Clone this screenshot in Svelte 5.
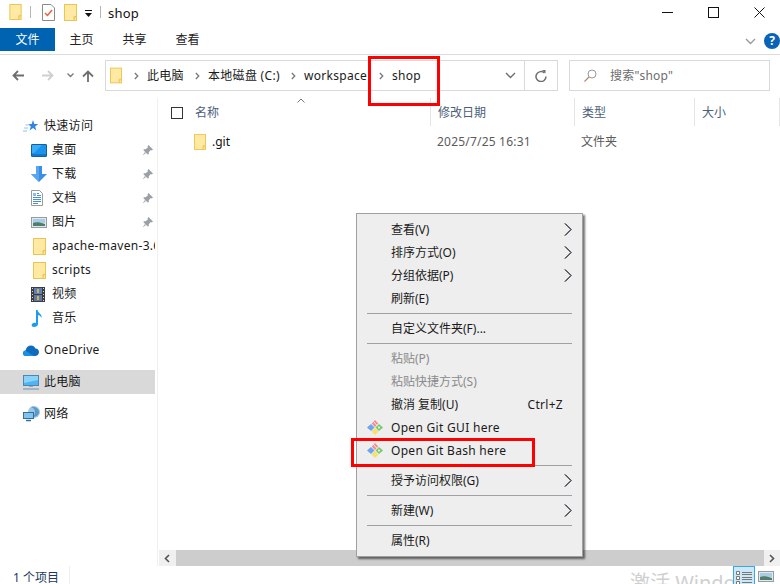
<script>
  const tabs = ["主页", "共享", "查看"];

  const crumbs = [
    { label: "此电脑", width: 48 },
    { label: "本地磁盘 (C:)", width: 83 },
    { label: "workspace", width: 75 },
    { label: "shop", width: 40 }
  ];

  const columns = [
    { label: "修改日期", width: 144 },
    { label: "类型", width: 120 },
    { label: "大小", width: 85 }
  ];

  const nav = [
    { label: "快速访问", icon: starIcon, top: true },
    { label: "桌面", icon: desktopIcon, pin: true },
    { label: "下载", icon: downloadIcon, pin: true },
    { label: "文档", icon: docsIcon, pin: true },
    { label: "图片", icon: picIcon, pin: true },
    { label: "apache-maven-3.6.3", icon: navFolder },
    { label: "scripts", icon: navFolder },
    { label: "视频", icon: videoIcon },
    { label: "音乐", icon: musicIcon },
    { label: "OneDrive", icon: cloudIcon, top: true, gap: true },
    { label: "此电脑", icon: pcIcon, top: true, gap: true, selected: true },
    { label: "网络", icon: netIcon, top: true, gap: true }
  ];

  const menu = [
    { label: "查看(V)", sub: true },
    { label: "排序方式(O)", sub: true },
    { label: "分组依据(P)", sub: true },
    { label: "刷新(E)" },
    { sep: true },
    { label: "自定义文件夹(F)..." },
    { sep: true },
    { label: "粘贴(P)", off: true },
    { label: "粘贴快捷方式(S)", off: true },
    { label: "撤消 复制(U)", key: "Ctrl+Z" },
    { label: "Open Git GUI here", git: true },
    { label: "Open Git Bash here", git: true },
    { sep: true },
    { label: "授予访问权限(G)", sub: true },
    { sep: true },
    { label: "新建(W)", sub: true },
    { sep: true },
    { label: "属性(R)" }
  ];
</script>

{#snippet folder(w, h)}
  <svg width={w} height={h} viewBox="0 0 13 17">
    <rect x="0.5" y="0.5" width="12" height="16" fill="#ffe9a3" stroke="#e9c551" />
    <path d="M10 16.5v-4h2.5" fill="#f6d874" stroke="#e9c551" />
  </svg>
{/snippet}

{#snippet navFolder()}
  <span class="nudge">{@render folder(13, 17)}</span>
{/snippet}

{#snippet chevron(w, h, color)}
  <svg width={w} height={h} viewBox="0 0 6 9">
    <path d="M1 1l3.5 3.5L1 8" fill="none" stroke={color} stroke-width="1.6" />
  </svg>
{/snippet}

{#snippet down(w, color)}
  <svg width={w} height="7" viewBox="0 0 11 7">
    <path d="M1 1l4.5 4.5L10 1" fill="none" stroke={color} stroke-width="1.4" />
  </svg>
{/snippet}

{#snippet starIcon()}
  <svg width="16" height="14" viewBox="0 0 16 14">
    <path d="M10 1l1.3 3.9h4l-3.2 2.5 1.2 4-3.3-2.4-3.4 2.4 1.2-4-2.6-2.2 3.500-.3z" fill="#2f86e0" />
    <path d="M1 9h4M2.500 6h3M0 12h4" stroke="#8fc2f2" />
  </svg>
{/snippet}

{#snippet desktopIcon()}
  <svg width="16" height="13" viewBox="0 0 16 13">
    <rect x="0.5" y="0.5" width="15" height="12" rx="0.5" fill="#1993ee" stroke="#11609f" />
    <path d="M1 11h14" stroke="#0b5da6" />
    <path d="M1 1h10L3 9H1z" fill="#39aef7" />
  </svg>
{/snippet}

{#snippet downloadIcon()}
  <svg width="16" height="16" viewBox="0 0 16 16">
    <path d="M5 0h6v8h5l-8 8-8-8h5z" fill="#3a8ee6" />
    <path d="M5 0h3v16L0 8h5z" fill="#59a6ee" />
  </svg>
{/snippet}

{#snippet docsIcon()}
  <svg width="12" height="16" viewBox="0 0 12 16">
    <path d="M.5.5h8l3 3v12H.500z" fill="#fff" stroke="#9a9a9a" />
    <path d="M6 3.500h2M6 5.500h4M2 7.500h8M2 9.500h8M2 11.500h8M2 13.500h5" stroke="#4a90d0" />
    <path d="M2 3h3v3H2z" fill="#8dbbe3" />
  </svg>
{/snippet}

{#snippet picIcon()}
  <svg width="16" height="11" viewBox="0 0 16 11">
    <rect x="0.5" y="0.5" width="15" height="10" fill="#dfe9f0" stroke="#9b9b9b" />
    <path d="M2 2h12v4H2z" fill="#a9cde4" />
    <path d="M2 6c3-1 6-1 12 1v2H2z" fill="#4f7f6a" />
  </svg>
{/snippet}

{#snippet videoIcon()}
  <svg width="14" height="15" viewBox="0 0 14 15">
    <rect width="14" height="15" fill="#3d3d3d" />
    <path d="M1 1.500h1M1 4.500h1M1 7.500h1M1 10.500h1M1 13.500h1M12 1.500h1M12 4.500h1M12 7.500h1M12 10.500h1M12 13.500h1" stroke="#d8d8d8" />
    <rect x="3" y="1" width="8" height="6" fill="#5f7fb8" />
    <rect x="3" y="8" width="8" height="6" fill="#5a78ae" />
    <path d="M6 2h2v4H6zM6 9h2v4H6z" fill="#d9b13b" />
  </svg>
{/snippet}

{#snippet musicIcon()}
  <svg width="12" height="17" viewBox="0 0 12 17">
    <path d="M5 0h1.500c.3 3 5 4 4 8-.6-2-2.500-3-3.500-3v9c0 2-2 3-4 3S0 15.500 1 14c1-1.200 2.800-1.500 4-1z" fill="#1d9bf0" />
  </svg>
{/snippet}

{#snippet cloudIcon()}
  <svg width="16" height="11" viewBox="0 0 16 11">
    <path d="M3 11C1 11 0 9.800 0 8.300 0 6.800 1.200 5.700 2.600 5.600 3 2.400 5.400.5 8 .5c2 0 3.700 1.200 4.400 3 2-.1 3.600 1.500 3.600 3.600 0 2-1.500 3.900-3.500 3.900z" fill="#0f6cbd" />
    <path d="M3 11C1 11 0 9.800 0 8.300 0 6.800 1.200 5.700 2.600 5.600l5 3.400 4 2z" fill="#1b8fe0" />
  </svg>
{/snippet}

{#snippet pcIcon()}
  <svg width="16" height="15" viewBox="0 0 16 15">
    <rect x="0.5" y="0.5" width="15" height="10" fill="#4fb4f5" stroke="#4f86ad" />
    <path d="M1 1h14v4L1 8z" fill="#8bd2fa" />
    <path d="M6 11h4v1H6z" fill="#9aa9b5" />
    <path d="M0 14h16" stroke="#8ba4b8" stroke-width="1.400" />
  </svg>
{/snippet}

{#snippet netIcon()}
  <svg width="17" height="16" viewBox="0 0 17 16">
    <circle cx="11" cy="6" r="6" fill="#9cc6e8" />
    <path d="M8 1c3 1 4 3 4 5s-1 4-3 5c4 0 7-2 7-5s-4-6-8-5z" fill="#5f97c6" />
    <rect x="0.500" y="6.500" width="10" height="6" fill="#7fc4ee" stroke="#356f97" />
    <path d="M3 14.500h5" stroke="#356f97" stroke-width="1.500" />
  </svg>
{/snippet}

{#snippet pin()}
  <svg width="11" height="11" viewBox="0 0 11 11">
    <path d="M6.500 0L11 4.500 9.700 5.500 8.800 5 6.800 7.300 6.800 9.300 5.700 9.500 1.500 5.300 1.700 4.200 3.700 4.200 6 2.200 5.500 1.300z" fill="#9aa0a6" />
    <path d="M3 7L.5 10.500 4 8z" fill="#9aa0a6" />
  </svg>
{/snippet}

{#snippet gitIcon()}
  <svg width="16" height="15" viewBox="0 0 16 15">
    <path d="M8 0l3.200 3.500L8 7 4.800 3.500z" fill="#f58b8b" />
    <path d="M12 4l4 3.500-4 3.500-3.500-3.500z" fill="#79c96f" />
    <path d="M8 8l3.500 3.500L8 15l-3.500-3.500z" fill="#f8e06c" />
    <path d="M4 4l3.500 3.500L4 11 0 7.500z" fill="#6ea4f2" />
    <path d="M6.500 1.500l3.500 4" stroke="#fff" stroke-width="0.900" />
    <circle cx="12" cy="7.500" r="1" fill="#fff" />
  </svg>
{/snippet}

<div class="window">
  <header class="titlebar">
    {@render folder(13, 16)}
    <i class="tsep"></i>
    <svg class="doc" width="13" height="17" viewBox="0 0 13 17">
      <path d="M.5.5h8.500l3.500 3.500v12.500H.5z" fill="#fff" stroke="#8b8b8b" />
      <path d="M3 9l2.500 2.500L10 6" fill="none" stroke="#e8603c" stroke-width="1.500" />
    </svg>
    {@render folder(13, 17)}
    <svg class="qat" width="7" height="7" viewBox="0 0 7 7">
      <path d="M0 0h7v1H0zM0 3h7L3.500 7z" fill="#111" />
    </svg>
    <i class="tsep"></i>
    <span class="title">shop</span>
    <div class="controls">
      <svg width="11" height="11" viewBox="0 0 11 11"><path d="M0 5.500h11" stroke="#111" /></svg>
      <svg width="11" height="11" viewBox="0 0 11 11"><rect x="0.500" y="0.500" width="10" height="10" fill="none" stroke="#111" /></svg>
      <svg width="11" height="11" viewBox="0 0 11 11"><path d="M.5.500l10 10M10.500.500l-10 10" stroke="#111" /></svg>
    </div>
  </header>

  <nav class="ribbon">
    <span class="file-tab">文件</span>
    {#each tabs as tab}
      <span class="tab">{tab}</span>
    {/each}
    <span class="ribbon-end">
      {@render down(11, "#9a9a9a")}
      <span class="help">?</span>
    </span>
  </nav>

  <div class="addressbar">
    <div class="nav-buttons">
      <svg width="12" height="11" viewBox="0 0 12 11"><path d="M12 5.500H1.500M6 1L1.500 5.500 6 10" fill="none" stroke="#6e6e6e" stroke-width="1.800" /></svg>
      <svg class="fwd" width="12" height="11" viewBox="0 0 12 11"><path d="M0 5.500h10.500M6 1l4.500 4.500L6 10" fill="none" stroke="#cfcfcf" stroke-width="1.800" /></svg>
      <svg class="hist" width="7" height="5" viewBox="0 0 7 5"><path d="M.5.500l3 3 3-3" fill="none" stroke="#777" stroke-width="1.300" /></svg>
      <svg class="up" width="12" height="12" viewBox="0 0 12 12"><path d="M6 12V1.500M1 6.500l5-5 5 5" fill="none" stroke="#6e6e6e" stroke-width="1.800" /></svg>
    </div>
    <div class="path">
      <span class="path-folder">{@render folder(12, 17)}</span>
      {#each crumbs as crumb}
        <span class="crumb-arrow">{@render chevron(5, 8, "#7b7b7b")}</span>
        <span class="crumb" style="width: {crumb.width}px">{crumb.label}</span>
      {/each}
      <span class="path-drop">{@render down(11, "#6e6e6e")}</span>
      <span class="refresh">
        <svg width="12" height="13" viewBox="0 0 12 13">
          <path d="M9.500 4A5 5 0 1 0 11 7.500" fill="none" stroke="#6e6e6e" stroke-width="1.500" />
          <path d="M7 1l3.500 0 0 3.500z" fill="#6e6e6e" />
        </svg>
      </span>
    </div>
    <div class="search">
      <svg width="13" height="13" viewBox="0 0 13 13">
        <circle cx="8" cy="5" r="4" fill="none" stroke="#9a9a9a" />
        <path d="M5 8l-4.500 4.500" stroke="#c0866a" stroke-width="1.200" />
      </svg>
      <span>搜索"shop"</span>
    </div>
  </div>

  <div class="main">
    <aside class="sidebar">
      {#each nav as item}
        <div class="nav-item" class:top={item.top} class:gap={item.gap} class:selected={item.selected}>
          <span class="nav-icon">{@render item.icon()}</span>
          <span class="nav-label">{item.label}</span>
          {#if item.pin}
            <span class="nav-pin">{@render pin()}</span>
          {/if}
        </div>
      {/each}
    </aside>

    <section class="content">
      <div class="columns">
        <div class="col name-col">
          <i class="check"></i>
          <span>名称</span>
          <svg class="sort" width="8" height="5" viewBox="0 0 8 5"><path d="M.5 4.500L4 1l3.500 3.500" fill="none" stroke="#777" /></svg>
        </div>
        {#each columns as col}
          <div class="col" style="width: {col.width}px"><span>{col.label}</span></div>
        {/each}
      </div>

      <div class="files">
        <div class="file-row">
          <span class="file-name">
            {@render folder(12, 16)}
            <b>.git</b>
          </span>
          <span class="file-date">2025/7/25 16:31</span>
          <span>文件夹</span>
        </div>
      </div>

      <div class="hscroll">
        <span class="sbtn">{@render chevron(6, 9, "#555")}</span>
        <span class="thumb"></span>
        <span class="sbtn end">{@render chevron(6, 9, "#555")}</span>
      </div>
    </section>
  </div>

  <footer class="status">
    <span class="count">1 个项目</span>
    <div class="views">
      <span class="view active">
        <svg width="16" height="13" viewBox="0 0 16 13">
          <path d="M.5.5h3v3h-3zM.5 5.500h3v3h-3zM.5 10.500h3v3h-3z" fill="#fff" stroke="#777" />
          <path d="M6 1.500h10M6 3.500h10M6 6.500h10M6 8.500h10M6 11.500h10" stroke="#777" />
        </svg>
      </span>
      <span class="view">{@render picIcon()}</span>
    </div>
  </footer>

  <div class="watermark">激活 Windows</div>

  <div class="context-menu">
    {#each menu as row}
      {#if row.sep}
        <div class="menu-sep"><i></i></div>
      {:else}
        <div class="menu-row" class:off={row.off}>
          <span class="menu-icon">
            {#if row.git}{@render gitIcon()}{/if}
          </span>
          <span class="menu-label" class:latin={row.git}>{row.label}</span>
          {#if row.key}<span class="menu-key">{row.key}</span>{/if}
          {#if row.sub}
            <svg class="menu-arrow" width="8" height="13" viewBox="0 0 8 13">
              <path d="M.5.500l6 6-6 6" fill="none" stroke="#e08a4a" />
              <path d="M1.500.500l6 6-6 6" fill="none" stroke="#3f86dc" />
              <path d="M1 .500l6 6-6 6" fill="none" stroke="#3a3a44" />
            </svg>
          {/if}
        </div>
      {/if}
    {/each}
  </div>

  <i class="mark mark-path"></i>
  <i class="mark mark-bash"></i>
</div>

<style>
  :global(body) {
    margin: 0;
    background: #fff;
  }

  .window {
    position: relative;
    width: 780px;
    height: 584px;
    overflow: hidden;
    display: flex;
    flex-direction: column;
    background: #fff;
    color: #111;
    font-family: "Noto Sans", "Noto Sans CJK SC", sans-serif;
    font-size: 12px;
    line-height: 16px;
  }

  svg {
    display: block;
    flex: none;
  }

  .titlebar {
    height: 28px;
    flex: none;
    display: flex;
    align-items: center;
    padding-left: 9px;
    padding-bottom: 4px;
    box-sizing: border-box;
  }

  .tsep {
    width: 1px;
    height: 12px;
    background: #b5b5b5;
    margin: 0 8px;
  }

  .titlebar .tsep:first-of-type {
    margin-right: 11px;
  }

  .doc {
    margin-right: 9px;
  }

  .qat {
    margin-left: 8px;
    margin-top: 3px;
  }

  .title {
    font-size: 13px;
    letter-spacing: 0.2px;
    margin-left: -1px;
    margin-top: 2px;
  }

  .controls {
    margin-left: auto;
    margin-right: 15px;
    display: flex;
    gap: 35px;
  }

  .ribbon {
    height: 27px;
    flex: none;
    box-sizing: border-box;
    border-bottom: 1px solid #dadbdc;
    display: flex;
    align-items: flex-start;
  }

  .file-tab {
    width: 55px;
    height: 23px;
    background: #0063b1;
    color: #fff;
    display: flex;
    align-items: center;
    justify-content: center;
  }

  .tab {
    width: 53px;
    height: 23px;
    display: flex;
    align-items: center;
    justify-content: center;
    color: #222;
  }

  .ribbon-end {
    margin-left: auto;
    height: 26px;
    display: flex;
    align-items: center;
    gap: 8px;
  }

  .help {
    width: 16px;
    height: 16px;
    border-radius: 50%;
    background: #0a63b5;
    color: #fff;
    font-weight: 700;
    font-size: 12px;
    text-align: center;
  }

  .addressbar {
    height: 43px;
    flex: none;
    box-sizing: border-box;
    padding-top: 5px;
    display: flex;
    align-items: flex-start;
  }

  .nav-buttons {
    width: 105px;
    height: 31px;
    flex: none;
    display: flex;
    align-items: center;
    padding-left: 12px;
    box-sizing: border-box;
  }

  .fwd {
    margin-left: 18px;
  }

  .hist {
    margin-left: 13px;
  }

  .up {
    margin-left: 8px;
  }

  .path {
    width: 453px;
    height: 31px;
    flex: none;
    box-sizing: border-box;
    border: 1px solid #d9d9d9;
    display: flex;
    align-items: center;
    padding-left: 4px;
  }

  .path-folder {
    margin-right: 12px;
  }

  .crumb-arrow {
    width: 13px;
  }

  .crumb {
    white-space: nowrap;
    letter-spacing: 0.3px;
    color: #1a1a1a;
  }

  .path-drop {
    margin-left: auto;
    margin-right: 8px;
  }

  .refresh {
    width: 32px;
    height: 29px;
    border-left: 1px solid #d9d9d9;
    display: flex;
    align-items: center;
    justify-content: center;
  }

  .search {
    width: 201px;
    height: 31px;
    flex: none;
    margin-left: 11px;
    box-sizing: border-box;
    border: 1px solid #d9d9d9;
    display: flex;
    align-items: center;
    gap: 13px;
    padding-left: 14px;
    color: #6d6d6d;
    letter-spacing: 0.2px;
  }

  .main {
    flex: 1;
    min-height: 0;
    display: flex;
  }

  .sidebar {
    width: 158px;
    flex: none;
    box-sizing: border-box;
    border-right: 1px solid #f0f0f0;
    padding-top: 16px;
    overflow: hidden;
  }

  .nav-item {
    height: 24px;
    width: 155px;
    display: flex;
    align-items: center;
    padding-left: 31px;
    box-sizing: border-box;
    overflow: hidden;
    position: relative;
  }

  .nav-item.top {
    padding-left: 23px;
  }

  .nav-item.gap {
    margin-top: 8px;
  }

  .nav-item.selected {
    background: #d9d9d9;
  }

  .nav-icon {
    width: 21px;
    flex: none;
    display: flex;
    justify-content: flex-start;
  }

  .nudge {
    margin-left: 2px;
  }

  .nav-label {
    white-space: nowrap;
    letter-spacing: 0.3px;
    color: #1a1a1a;
  }

  .nav-pin {
    position: absolute;
    left: 142px;
    top: 7px;
  }

  .content {
    flex: 1;
    min-width: 0;
    display: flex;
    flex-direction: column;
  }

  .columns {
    height: 28px;
    flex: none;
    display: flex;
    color: #4c607a;
  }

  .col {
    box-sizing: border-box;
    border-right: 1px solid #e5e5e5;
    padding-left: 7px;
    padding-top: 1px;
    display: flex;
    align-items: center;
    flex: none;
  }

  .name-col {
    width: 273px;
    position: relative;
    padding-left: 13px;
  }

  .check {
    width: 12px;
    height: 12px;
    border: 1px solid #333;
    box-sizing: border-box;
    margin-right: 12px;
  }

  .sort {
    position: absolute;
    left: 139px;
    top: 0;
  }

  .files {
    flex: 1;
    padding-top: 4px;
  }

  .file-row {
    height: 24px;
    display: flex;
    align-items: center;
    color: #5b5b5b;
  }

  .file-name {
    width: 279px;
    flex: none;
    box-sizing: border-box;
    padding-left: 36px;
    display: flex;
    align-items: center;
    gap: 6px;
  }

  .file-name b {
    font-weight: 400;
    color: #111;
  }

  .file-date {
    width: 144px;
    flex: none;
    letter-spacing: 0.2px;
  }

  .hscroll {
    height: 16px;
    flex: none;
    display: flex;
    align-items: stretch;
    padding-left: 1px;
  }

  .sbtn {
    width: 17px;
    background: #f0f0f0;
    display: flex;
    align-items: center;
    justify-content: center;
    transform: scaleX(-1);
  }

  .sbtn.end {
    width: 16px;
    transform: none;
  }

  .thumb {
    flex: 1;
    background: #cdcdcd;
  }

  .status {
    height: 18px;
    flex: none;
    display: flex;
    align-items: flex-start;
    color: #1e395b;
  }

  .count {
    width: 70px;
    box-sizing: border-box;
    padding-left: 13px;
    padding-top: 4px;
    height: 18px;
    border-right: 1px solid #eee;
    white-space: nowrap;
  }

  .views {
    margin-left: auto;
    margin-right: 5px;
    display: flex;
    align-items: flex-start;
    position: relative;
    z-index: 1;
    background: #fff;
    box-shadow: 5px 0 0 #fff;
  }

  .view {
    width: 18px;
    height: 18px;
    display: flex;
    justify-content: center;
    padding-top: 5px;
    box-sizing: border-box;
  }

  .view.active {
    width: 22px;
    background: #cce8f7;
    border: 1px solid #3ea6e0;
    border-bottom: none;
    margin-right: 2px;
    padding-top: 4px;
  }

  .watermark {
    position: absolute;
    left: 630px;
    top: 571px;
    font-size: 20px;
    line-height: 24px;
    color: #cfcfcf;
    white-space: nowrap;
  }

  .context-menu {
    position: absolute;
    left: 356px;
    top: 213px;
    width: 227px;
    height: 344px;
    box-sizing: border-box;
    padding-top: 4px;
    background: #eeeeee;
    border: 1px solid #a0a0a0;
    box-shadow: 2px 2px 2px rgba(0, 0, 0, 0.55);
    color: #1a1a1a;
  }

  .menu-row {
    height: 23px;
    display: flex;
    align-items: center;
    padding-right: 10px;
  }

  .menu-row.off {
    color: #8a8a8a;
  }

  .menu-icon {
    width: 34px;
    flex: none;
    padding-left: 10px;
    box-sizing: border-box;
  }

  .menu-label {
    white-space: nowrap;
  }

  .menu-label.latin {
    letter-spacing: 0.3px;
  }

  .menu-key {
    margin-left: auto;
    margin-right: 9px;
    letter-spacing: 0.3px;
  }

  .menu-arrow {
    margin-left: auto;
  }

  .menu-sep {
    height: 7px;
    display: flex;
    align-items: center;
    padding: 0 10px;
  }

  .menu-sep i {
    flex: 1;
    height: 1px;
    background: #a0a0a0;
  }

  .mark {
    position: absolute;
    box-sizing: border-box;
    border: 3px solid #ff0000;
  }

  .mark-path {
    left: 368px;
    top: 56px;
    width: 72px;
    height: 50px;
  }

  .mark-bash {
    left: 351px;
    top: 438px;
    width: 184px;
    height: 29px;
  }
</style>
